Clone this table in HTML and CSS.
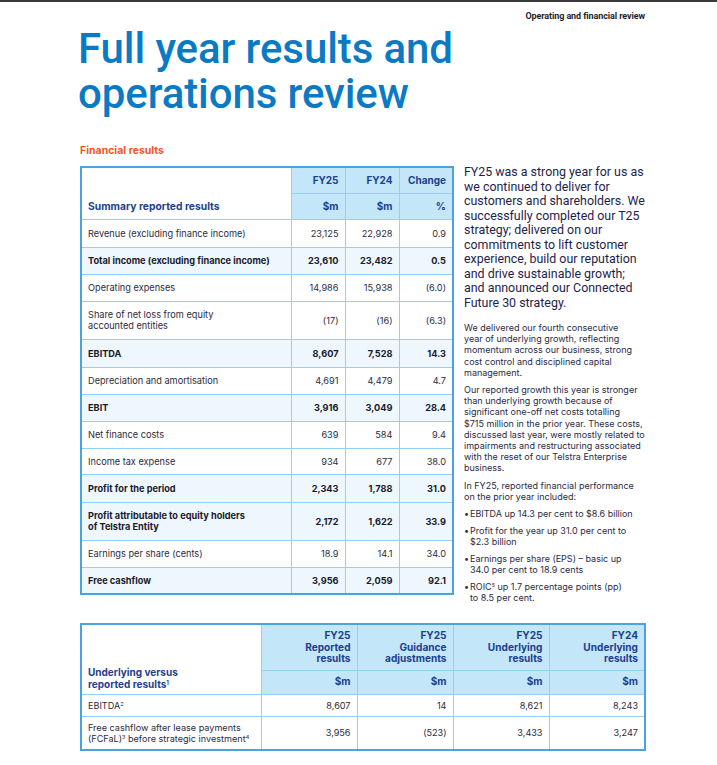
FILE: index.html
```html
<!DOCTYPE html>
<html lang="en">
<head>
<meta charset="utf-8">
<title>Full year results and operations review</title>
<link rel="stylesheet" href="styles.css">
</head>
<body>
<div class="page">
  <header class="topbar">
    <span class="section-label">Operating and financial review</span>
  </header>
  <h1 class="title">Full year results and<br>operations review</h1>

  <div class="main">
    <h2 class="subhead">Financial results</h2>
    <table class="fin">
      <colgroup>
        <col class="c-label"><col class="c-num"><col class="c-num"><col class="c-num">
      </colgroup>
      <thead>
        <tr class="h1row">
          <th class="label-head" rowspan="2">Summary reported results</th>
          <th class="num-head">FY25</th>
          <th class="num-head">FY24</th>
          <th class="num-head">Change</th>
        </tr>
        <tr class="h2row">
          <th class="num-head">$m</th>
          <th class="num-head">$m</th>
          <th class="num-head">%</th>
        </tr>
      </thead>
      <tbody>
        <tr class="r28"><td>Revenue (excluding finance income)</td><td>23,125</td><td>22,928</td><td>0.9</td></tr>
        <tr class="r27 strong"><td>Total income (excluding finance income)</td><td>23,610</td><td>23,482</td><td>0.5</td></tr>
        <tr class="r27"><td>Operating expenses</td><td>14,986</td><td>15,938</td><td>(6.0)</td></tr>
        <tr class="r38"><td>Share of net loss from equity<br>accounted entities</td><td>(17)</td><td>(16)</td><td>(6.3)</td></tr>
        <tr class="r28 strong"><td>EBITDA</td><td>8,607</td><td>7,528</td><td>14.3</td></tr>
        <tr class="r27"><td>Depreciation and amortisation</td><td>4,691</td><td>4,479</td><td>4.7</td></tr>
        <tr class="r27 strong"><td>EBIT</td><td>3,916</td><td>3,049</td><td>28.4</td></tr>
        <tr class="r27"><td>Net finance costs</td><td>639</td><td>584</td><td>9.4</td></tr>
        <tr class="r26"><td>Income tax expense</td><td>934</td><td>677</td><td>38.0</td></tr>
        <tr class="r28 strong"><td>Profit for the period</td><td>2,343</td><td>1,788</td><td>31.0</td></tr>
        <tr class="r38 strong"><td>Profit attributable to equity holders<br>of Telstra Entity</td><td>2,172</td><td>1,622</td><td>33.9</td></tr>
        <tr class="r27"><td>Earnings per share (cents)</td><td>18.9</td><td>14.1</td><td>34.0</td></tr>
        <tr class="r27 strong"><td>Free cashflow</td><td>3,956</td><td>2,059</td><td>92.1</td></tr>
      </tbody>
    </table>

    <aside class="commentary">
      <p class="lead">FY25 was a strong year for us as<br>we continued to deliver for<br>customers and shareholders. We<br>successfully completed our T25<br>strategy; delivered on our<br>commitments to lift customer<br>experience, build our reputation<br>and drive sustainable growth;<br>and announced our Connected<br>Future 30 strategy.</p>
      <p>We delivered our fourth consecutive<br>year of underlying growth, reflecting<br>momentum across our business, strong<br>cost control and disciplined capital<br>management.</p>
      <p>Our reported growth this year is stronger<br>than underlying growth because of<br>significant one-off net costs totalling<br>$715 million in the prior year. These costs,<br>discussed last year, were mostly related to<br>impairments and restructuring associated<br>with the reset of our Telstra Enterprise<br>business.</p>
      <p>In FY25, reported financial performance<br>on the prior year included:</p>
      <ul class="bullets">
        <li>EBITDA up 14.3 per cent to $8.6 billion</li>
        <li>Profit for the year up 31.0 per cent to<br>$2.3 billion</li>
        <li>Earnings per share (EPS) – basic up<br>34.0 per cent to 18.9 cents</li>
        <li>ROIC<sup>5</sup> up 1.7 percentage points (pp)<br>to 8.5 per cent.</li>
      </ul>
    </aside>
  </div>

  <table class="under">
    <colgroup>
      <col class="u-label"><col class="u-num"><col class="u-num"><col class="u-num"><col class="u-num">
    </colgroup>
    <thead>
      <tr class="uh1">
        <th class="label-head" rowspan="2">Underlying versus<br>reported results<sup>1</sup></th>
        <th class="num-head">FY25<br>Reported<br>results</th>
        <th class="num-head">FY25<br>Guidance<br>adjustments</th>
        <th class="num-head">FY25<br>Underlying<br>results</th>
        <th class="num-head">FY24<br>Underlying<br>results</th>
      </tr>
      <tr class="uh2">
        <th class="num-head">$m</th>
        <th class="num-head">$m</th>
        <th class="num-head">$m</th>
        <th class="num-head">$m</th>
      </tr>
    </thead>
    <tbody>
      <tr class="u22"><td>EBITDA<sup>2</sup></td><td>8,607</td><td>14</td><td>8,621</td><td>8,243</td></tr>
      <tr class="u34"><td>Free cashflow after lease payments<br>(FCFaL)<sup>3</sup> before strategic investment<sup>4</sup></td><td>3,956</td><td>(523)</td><td>3,433</td><td>3,247</td></tr>
    </tbody>
  </table>
</div>
</body>
</html>
```

FILE: styles.css
```css
* { box-sizing: border-box; }

html, body {
  margin: 0;
  padding: 0;
  background: #ffffff;
}

body {
  font-family: Inter, Roboto, "Liberation Sans", Arial, sans-serif;
  color: #23233a;
  border-top: 2px solid #3a3a3a;
}

.page {
  width: 717px;
  padding: 0 0 0 80px;
}

.topbar {
  display: flex;
  justify-content: flex-end;
  padding: 9px 72px 0 0;
  height: 22px;
}

.section-label {
  font-family: Roboto, "Liberation Sans", Arial, sans-serif;
  font-size: 9px;
  font-weight: 700;
  color: #1f1f2a;
  letter-spacing: -0.1px;
}

.title {
  font-family: Roboto, "Liberation Sans", Arial, sans-serif;
  margin: 2px 0 0 -2px;
  font-size: 42px;
  line-height: 45px;
  font-weight: 500;
  color: #0b7ac4;
  letter-spacing: -0.1px;
}

.main {
  display: grid;
  grid-template-columns: 371px 200px;
  grid-template-rows: auto 427px;
  column-gap: 13px;
  margin-top: 29px;
}

.subhead {
  grid-column: 1;
  grid-row: 1;
  margin: 0 0 9px 0;
  font-size: 10.5px;
  line-height: 12px;
  font-weight: 700;
  color: #f2552c;
}

/* ---------- tables ---------- */
table {
  border-collapse: collapse;
  table-layout: fixed;
  border: 2px solid #4aa3da;
}

th, td {
  border: 1.5px solid #8fd2f3;
  padding: 0 6px;
  font-size: 9.2px;
  line-height: 11px;
  vertical-align: middle;
  text-align: right;
  color: #2b2b3c;
  white-space: nowrap;
}

td:first-child { text-align: left; }

th { font-weight: 700; color: #1d3f8e; }

.num-head { background: #c3e6f8; font-size: 10px; }

.label-head {
  text-align: left;
  vertical-align: bottom;
  background: #ffffff;
}

.fin {
  grid-column: 1;
  grid-row: 2;
  width: 371px;
  align-self: start;
}

.c-label { width: 210px; }
.c-num { width: 54px; }

.fin .label-head { font-size: 10.3px; padding-bottom: 7px; }

.h1row, .h2row { height: 26px; }
.r26 { height: 26px; }
.r27 { height: 27px; }
.r28 { height: 28px; }
.r38 { height: 38px; }

.strong td {
  background: #eef7fd;
  font-weight: 700;
  color: #1a1a2c;
}

/* ---------- commentary ---------- */
.commentary {
  grid-column: 2;
  grid-row: 2;
  font-size: 9px;
  line-height: 11.2px;
  color: #2a2a44;
  white-space: nowrap;
}

.commentary p { margin: 0 0 6px 0; }

.commentary .lead {
  font-family: Roboto, "Liberation Sans", Arial, sans-serif;
  font-size: 12.4px;
  line-height: 14.5px;
  color: #1e1e4a;
  margin: -1px 0 12px 0;
}

.bullets {
  list-style: none;
  margin: 0;
  padding: 0;
}

.bullets li {
  position: relative;
  padding-left: 6px;
  margin-bottom: 5.5px;
}

.bullets li::before {
  content: "•";
  position: absolute;
  left: 0;
  top: 0;
}

sup {
  font-size: 0.6em;
  line-height: 0;
  vertical-align: 0.55em;
}

/* ---------- underlying table ---------- */
.under {
  width: 563px;
  margin-top: 30px;
}

.u-label { width: 180px; }
.u-num { width: 96px; }

.under .label-head {
  font-size: 10px;
  line-height: 12px;
  padding-bottom: 4px;
}

.under .num-head {
  font-size: 10.1px;
  line-height: 11.2px;
}

.uh1 { height: 46px; }
.uh2 { height: 24px; }
.u22 { height: 22px; }
.u34 { height: 34px; }

.under td { font-size: 9.1px; }
```
